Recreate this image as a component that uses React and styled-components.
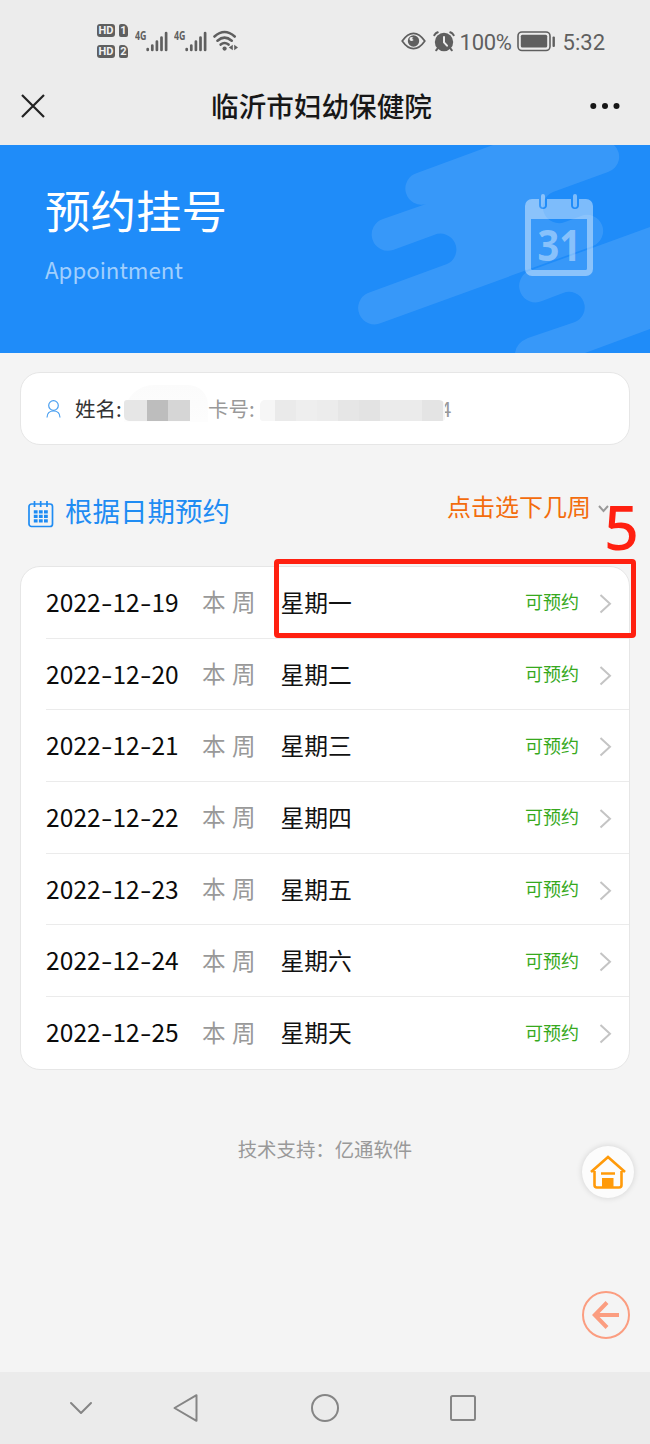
import React from 'react';
import styled, { createGlobalStyle } from 'styled-components';

const GlobalStyle = createGlobalStyle`
  * {
    box-sizing: border-box;
  }

  body {
    margin: 0;
    background: #f4f4f4;
    font-family: "Noto Sans CJK SC", "Noto Sans", sans-serif;
  }

  svg {
    display: block;
    flex-shrink: 0;
  }
`

const Page = styled.div`
  position: relative;
  display: flex;
  flex-direction: column;
  width: 650px;
  height: 1444px;
  overflow: hidden;
  background: #f4f4f4;
  white-space: nowrap;
`

const StatusBar = styled.div`
  display: flex;
  justify-content: space-between;
  align-items: center;
  height: 70px;
  padding: 12px 45px 0 97px;
  background: #ececec;
  color: #5f5f5f;
`

const StatusGroup = styled.div`
  display: flex;
  align-items: center;
`

const StatusText = styled.span`
  font-family: Roboto, sans-serif;
  font-size: 22px;
  line-height: 26px;
  padding-top: 3px;
  letter-spacing: ${({ $spacing }) => $spacing || 0};
  margin-left: ${({ $left }) => $left || 0};
`

const SimList = styled.div`
  display: grid;
  gap: 8px;
  margin-right: 7px;
`

const SimRow = styled.div`
  display: flex;
  gap: 4px;
`

const SimBadge = styled.span`
  display: flex;
  align-items: center;
  justify-content: center;
  width: ${({ $width }) => $width};
  height: 13px;
  border-radius: ${({ $radius }) => $radius || '3px'};
  background: #5f5f5f;
  color: #f2f2f2;
  font: 700 11px/13px Roboto, sans-serif;
`

const Signal = styled.div`
  display: flex;
  align-items: flex-end;
  width: 33px;
  height: 22px;
  margin-right: 6px;
`

const SignalType = styled.span`
  align-self: flex-start;
  width: 11px;
  font: 700 13px/10px "Noto Sans", sans-serif;
  transform: scaleX(0.68);
  transform-origin: left;
`

const NavBar = styled.div`
  display: grid;
  grid-template-columns: 60px 1fr 60px;
  align-items: center;
  height: 75px;
  padding-bottom: 3px;
  background: #ececec;
`

const NavTitle = styled.h1`
  margin: 0;
  padding: 0 7px 2px 0;
  text-align: center;
  color: #171717;
  font-size: 27.6px;
  line-height: 40px;
  font-weight: 500;
`

const NavIcon = styled.div`
  padding-left: ${({ $left }) => $left};
`

const Banner = styled.div`
  position: relative;
  height: 208px;
  padding: 32px 45px 0;
  background: #1f8cf9;
`

const BannerArt = styled.svg`
  position: absolute;
  top: 0;
  left: 0;
`

const BannerTitle = styled.div`
  color: #fff;
  font-size: 45.5px;
  line-height: 64px;
`

const BannerSub = styled.div`
  margin-top: 12px;
  color: #a1cffd;
  font-size: 22.3px;
  line-height: 32px;
`

const PatientCard = styled.div`
  display: flex;
  align-items: center;
  height: 73px;
  margin: 19px 20px 0;
  padding: 0 0 0 25px;
  border: 1px solid #e6e6e6;
  border-radius: 20px;
  background: #fff;
  font-size: 20.5px;
`

const Label = styled.span`
  color: ${({ $muted }) => ($muted ? '#999' : '#333')};
  margin-left: ${({ $left }) => $left};
  width: ${({ $width }) => $width};
  padding-bottom: 2px;
`

const Mosaic = styled.div`
  position: relative;
  display: flex;
  height: 21px;
  margin-top: 4px;
  border-radius: ${({ $radius }) => $radius};
  overflow: hidden;
`

const MosaicCell = styled.span`
  width: ${({ $width }) => $width}px;
  background: ${({ $color }) => $color};
`

const NameMask = styled.div`
  align-self: flex-start;
  width: 84px;
  height: 37px;
  margin-top: 12px;
  padding-top: 11px;
  border-radius: 30px 20px 0 0;
  background: linear-gradient(#fbfbfb, #fdfdfd);
`

const CardTail = styled.span`
  margin-left: -5px;
  padding-bottom: 1px;
  color: #999;
`

const SectionHead = styled.div`
  display: flex;
  justify-content: space-between;
  height: 121px;
  padding: 0 41px 0 28px;
`

const SectionTitle = styled.div`
  display: flex;
  align-items: flex-start;
  padding-top: 45px;
  gap: 11px;
  color: #1f8cf3;
  font-size: 27.5px;
  line-height: 40px;

  svg {
    margin-top: 11px;
  }
`

const WeekPicker = styled.div`
  display: flex;
  align-items: flex-start;
  padding-top: 44px;
  gap: 7px;
  color: #f36c0c;
  font-size: 24px;
  line-height: 34px;

  svg {
    margin-top: 16px;
  }
`

const DateList = styled.div`
  display: grid;
  grid-template-rows: repeat(7, 71.7px);
  height: 504px;
  margin: 0 20px;
  padding-left: 25px;
  border: 1px solid #e6e6e6;
  border-radius: 20px;
  background: #fff;
`

const DateRow = styled.div`
  display: grid;
  grid-template-columns: 156px 78.5px 1fr auto 30px;
  align-items: center;
  padding-bottom: 2px;
  border-bottom: ${({ $last }) => ($last ? 'none' : '1px solid #ebebeb')};
`

const DateText = styled.span`
  color: #0b0b0b;
  font-size: 24.5px;
  letter-spacing: 0.1px;
`

const Dash = styled.span`
  display: inline-block;
  width: 11.6px;
  text-align: center;
  transform: scaleX(1.35);
`

const WeekText = styled.span`
  color: #999;
  font-size: 23.6px;
  word-spacing: 1px;
`

const DayText = styled.span`
  color: #111;
  font-size: 23.8px;
`

const OpenText = styled.span`
  margin-right: 20px;
  color: #37a91d;
  font-size: 18px;
`

const RowArrow = styled.svg`
  margin-top: 5px;
`

const Support = styled.div`
  margin-top: 64px;
  text-align: center;
  color: #999;
  font-size: 19.4px;
  line-height: 30px;
`

const RoundButton = styled.button`
  position: absolute;
  top: ${({ $top }) => $top}px;
  right: ${({ $right }) => $right}px;
  display: flex;
  align-items: center;
  justify-content: center;
  width: ${({ $size }) => $size}px;
  height: ${({ $size }) => $size}px;
  padding: 0;
  border: ${({ $border }) => $border || 'none'};
  border-radius: 50%;
  background: ${({ $bg }) => $bg || 'transparent'};
  box-shadow: ${({ $shadow }) => $shadow || 'none'};
`

const MarkBox = styled.div`
  position: absolute;
  top: 559px;
  left: 274px;
  width: 362px;
  height: 79px;
  border: 5px solid #ff2010;
  border-radius: 4px;
`

const MarkNumber = styled.div`
  position: absolute;
  top: 484px;
  left: 604px;
  color: #ff2010;
  font: 500 61px/86px "Noto Sans", sans-serif;
`

const SystemBar = styled.div`
  display: flex;
  align-items: center;
  height: 72px;
  margin-top: auto;
  padding-left: 69px;
  background: #ebebeb;
`

const NAME_CELLS = [[23, '#e6e6e6'], [21, '#bdbdbd'], [22, '#d6d6d6']]

const CARD_CELLS = [
  [15, '#f6f6f6'], [21, '#eaeaea'], [21, '#eeeeee'], [21, '#ececec'], [21, '#e6e6e6'],
  [21, '#e3e3e3'], [21, '#ebebeb'], [21, '#ebebeb'], [21, '#e4e4e4'], [2, '#f6f6f6'],
]

const DAYS = [
  ['2022-12-19', '星期一'],
  ['2022-12-20', '星期二'],
  ['2022-12-21', '星期三'],
  ['2022-12-22', '星期四'],
  ['2022-12-23', '星期五'],
  ['2022-12-24', '星期六'],
  ['2022-12-25', '星期天'],
]

const SignalIcon = () => (
  <Signal>
    <SignalType>4G</SignalType>
    <svg width="22" height="21" stroke="#5f5f5f" strokeWidth="2.7" strokeLinecap="round">
      <path d="M1.7 18v1M6.3 14.5V19M10.9 10.5V19M15.5 6.5V19M20.1 2V19" />
    </svg>
  </Signal>
)

const WifiIcon = () => (
  <svg width="26" height="22" viewBox="0 0 26 22" fill="none" stroke="#5f5f5f" strokeWidth="2.6" strokeLinecap="round">
    <path d="M1.5 6.5Q11.5-2.5 21.7 6.5M4.5 10.7Q11.5 4.7 18.7 10.7M7.7 14.6Q11.5 11.4 15.5 14.6" />
    <circle cx="11.6" cy="18.6" r="2.1" fill="#5f5f5f" stroke="none" />
    <path d="M19.8 14.8v5.5l-4-2.7zM21.2 14.8v5.5l3.8-2.7z" fill="#5f5f5f" stroke="none" />
  </svg>
)

const EyeIcon = () => (
  <svg width="25" height="18" viewBox="0 0 25 18" fill="none">
    <path d="M1.2 9Q6.5 1.3 12.5 1.3T23.8 9Q18.5 16.7 12.5 16.7T1.2 9z" stroke="#5f5f5f" strokeWidth="1.7" />
    <circle cx="12.5" cy="9" r="5.7" fill="#5f5f5f" />
    <circle cx="10.6" cy="7" r="2.1" fill="#ececec" />
    <circle cx="12.6" cy="6.6" r="1.2" fill="#5f5f5f" />
  </svg>
)

const AlarmIcon = () => (
  <svg width="22" height="21" viewBox="0 0 22 21" fill="none" strokeLinecap="round">
    <circle cx="11" cy="11" r="9.2" fill="#5f5f5f" />
    <path d="M1.3 4.2Q2.5 2.2 4.7 1.3M20.7 4.2Q19.5 2.2 17.3 1.3M4.500 17.5L3.2 19.3M17.500 17.5l1.3 1.8" stroke="#5f5f5f" strokeWidth="2" />
    <path d="M11 6v5.4l3 3.300" stroke="#ececec" strokeWidth="2" />
  </svg>
)

const BatteryIcon = () => (
  <svg width="39" height="21" viewBox="0 0 39 21" fill="none">
    <rect x="1" y="1" width="32" height="18.5" rx="4" stroke="#5f5f5f" strokeWidth="1.6" />
    <rect x="3.8" y="3.8" width="26.4" height="12.8" rx="1.5" fill="#5f5f5f" />
    <rect x="35.5" y="5.5" width="2.4" height="10.5" rx="1" fill="#5f5f5f" />
  </svg>
)

const BannerPicture = () => (
  <BannerArt width="650" height="208" viewBox="0 145 650 208">
    <g fill="#fff" fillOpacity="0.11">
      <path d="M493 145L417 173A16 16 0 0 0 426 204L383 219A16 16 0 0 0 393 250L434 235A15 15 0 0 1 447 264L368 293A16 16 0 0 0 381 323L593 246A16 16 0 0 0 581 216L565 222A16 16 0 0 1 553 192L608 172A16 16 0 0 0 614 145Z" />
      <path d="M650 227L529 271A16 16 0 0 0 542 301L563 293A15 15 0 0 1 575 322L528 338Q516 343 515 353H585L650 329Z" />
    </g>
    <g fill="#fff" fillOpacity="0.42">
      <path
        fillRule="evenodd"
        d="M532 199H539V205A4 4 0 0 0 547 205V199H571V205A4 4 0 0 0 579 205V199H586A7 7 0 0 1 593 206V269A7 7 0 0 1 586 276H532A7 7 0 0 1 525 269V206A7 7 0 0 1 532 199ZM531 219V268.500Q531 270 532.500 270H585.500Q587 270 587 268.500V219Z"
      />
      <rect x="541" y="194" width="4" height="13.500" rx="2" />
      <rect x="573" y="194" width="4" height="13.500" rx="2" />
      <text x="537.500" y="260.500" fontFamily="Noto Sans" fontWeight="700" fontSize="43" textLength="43.500" lengthAdjust="spacingAndGlyphs">31</text>
    </g>
  </BannerArt>
)

const CalendarIcon = () => (
  <svg width="26" height="27" viewBox="0 0 26 27" fill="none" stroke="#1f8cf3" strokeWidth="1.7">
    <rect x="1" y="3" width="23.500" height="22.500" rx="2.500" />
    <path d="M6.500 0v6M12.700 0v6M19 0v6" />
    <path d="M5.800 10.800H19.800M5.800 15.300H19.800M5.800 19.800H19.800" strokeWidth="3.200" strokeDasharray="3.800 1.300" />
  </svg>
)

const DateLabel = ({ value }) => {
  const [year, month, day] = value.split('-')
  return <DateText>{year}<Dash>-</Dash>{month}<Dash>-</Dash>{day}</DateText>
}

const CardMask = () => (
  <>
    <Mosaic $radius="5px 6px 3px 3px">
      {CARD_CELLS.map(([width, color], i) => <MosaicCell key={i} $width={width} $color={color} />)}
    </Mosaic>
    <CardTail>4</CardTail>
  </>
)

const App = () => (
  <Page>
    <GlobalStyle />
    <StatusBar>
      <StatusGroup>
        <SimList>
          {[1, 2].map((sim) => (
            <SimRow key={sim}>
              <SimBadge $width="18px">HD</SimBadge>
              <SimBadge $width="9px" $radius="2px 5px 2px 2px">{sim}</SimBadge>
            </SimRow>
          ))}
        </SimList>
        <SignalIcon />
        <SignalIcon />
        <WifiIcon />
      </StatusGroup>
      <StatusGroup>
        <EyeIcon />
        <StatusText $left="7px" />
        <AlarmIcon />
        <StatusText $left="5px" $spacing="-0.3px">100%</StatusText>
        <StatusText $left="5px" />
        <BatteryIcon />
        <StatusText $left="7px">5:32</StatusText>
      </StatusGroup>
    </StatusBar>

    <NavBar>
      <NavIcon $left="21px">
        <svg width="24" height="24" stroke="#222" strokeWidth="2.2">
          <path d="M1 1L23 23M23 1L1 23" />
        </svg>
      </NavIcon>
      <NavTitle>临沂市妇幼保健院</NavTitle>
      <NavIcon $left="0">
        <svg width="32" height="8" fill="#171717">
          <circle cx="3.300" cy="4" r="3" />
          <circle cx="15" cy="4" r="3" />
          <circle cx="26.500" cy="4" r="3" />
        </svg>
      </NavIcon>
    </NavBar>

    <Banner>
      <BannerPicture />
      <BannerTitle>预约挂号</BannerTitle>
      <BannerSub>Appointment</BannerSub>
    </Banner>

    <PatientCard>
      <svg width="15" height="18" viewBox="0 0 15 18" fill="none" stroke="#4a9ff0" strokeWidth="1.200">
        <circle cx="7.500" cy="5.500" r="4.800" />
        <path d="M1 17.500Q1.200 11 7.500 11T14 17.500" />
      </svg>
      <Label $left="14px" $width="49px">姓名:</Label>
      <NameMask>
        <Mosaic $radius="3px 0 0 5px">
          {NAME_CELLS.map(([width, color], i) => <MosaicCell key={i} $width={width} $color={color} />)}
        </Mosaic>
      </NameMask>
      <Label $muted $left="0" $width="52px">卡号:</Label>
      <CardMask />
    </PatientCard>

    <SectionHead>
      <SectionTitle>
        <CalendarIcon />
        根据日期预约
      </SectionTitle>
      <WeekPicker>
        点击选下几周
        <svg width="11" height="8" fill="none" stroke="#999" strokeWidth="2">
          <path d="M1 1L5.500 6L10 1" />
        </svg>
      </WeekPicker>
    </SectionHead>

    <DateList>
      {DAYS.map(([date, day], i) => (
        <DateRow key={date} $last={i === DAYS.length - 1}>
          <DateLabel value={date} />
          <WeekText>本 周</WeekText>
          <DayText>{day}</DayText>
          <OpenText>可预约</OpenText>
          <RowArrow width="13" height="20" fill="none" stroke="#c4c4c4" strokeWidth="2">
            <path d="M1.500 1L11 9.800L1.500 18.600" />
          </RowArrow>
        </DateRow>
      ))}
    </DateList>

    <Support>技术支持：亿通软件</Support>

    <SystemBar>
      <svg width="24" height="14" fill="none" stroke="#858585" strokeWidth="2" strokeLinecap="round" strokeLinejoin="round">
        <path d="M2 2L12 12L22 2" />
      </svg>
      <svg width="107" height="30" viewBox="-80 0 107 30" fill="none" stroke="#858585" strokeWidth="2" strokeLinejoin="round">
        <path d="M23.500 2.200V27.800L1.500 15Z" />
      </svg>
      <svg width="140" height="30" viewBox="-110 0 140 30" fill="none" stroke="#858585" strokeWidth="2">
        <circle cx="15" cy="15" r="13" />
      </svg>
      <svg width="138" height="28" viewBox="-110 0 138 28" fill="none" stroke="#858585" strokeWidth="2">
        <rect x="1" y="2" width="24" height="24" rx="1.500" />
      </svg>
    </SystemBar>

    <RoundButton $top={1146} $right={16} $size={52} $bg="#fcfcfc" $shadow="0 0 6px rgba(0, 0, 0, 0.14)">
      <svg width="36" height="34" viewBox="0 0 36 34" fill="none" stroke="#ff9a0a" strokeWidth="2.600">
        <path d="M1 17L18 2L35 17M4.500 16V30Q4.500 32.500 7 32.500H29Q31.500 32.500 31.500 30V16M11 18.500H25" />
        <path d="M12 23H23.500V32H12z" fill="#ff9a0a" stroke="none" />
      </svg>
    </RoundButton>
    <RoundButton $top={1291} $right={20} $size={48} $border="2px solid #fb9d80">
      <svg width="28" height="28" viewBox="0 0 28 28" fill="none" stroke="#fb9d80" strokeWidth="4">
        <path d="M15 1.500L2.800 14L15 26.500M3 14H27" />
      </svg>
    </RoundButton>

    <MarkBox />
    <MarkNumber>5</MarkNumber>
  </Page>
)

export default App
